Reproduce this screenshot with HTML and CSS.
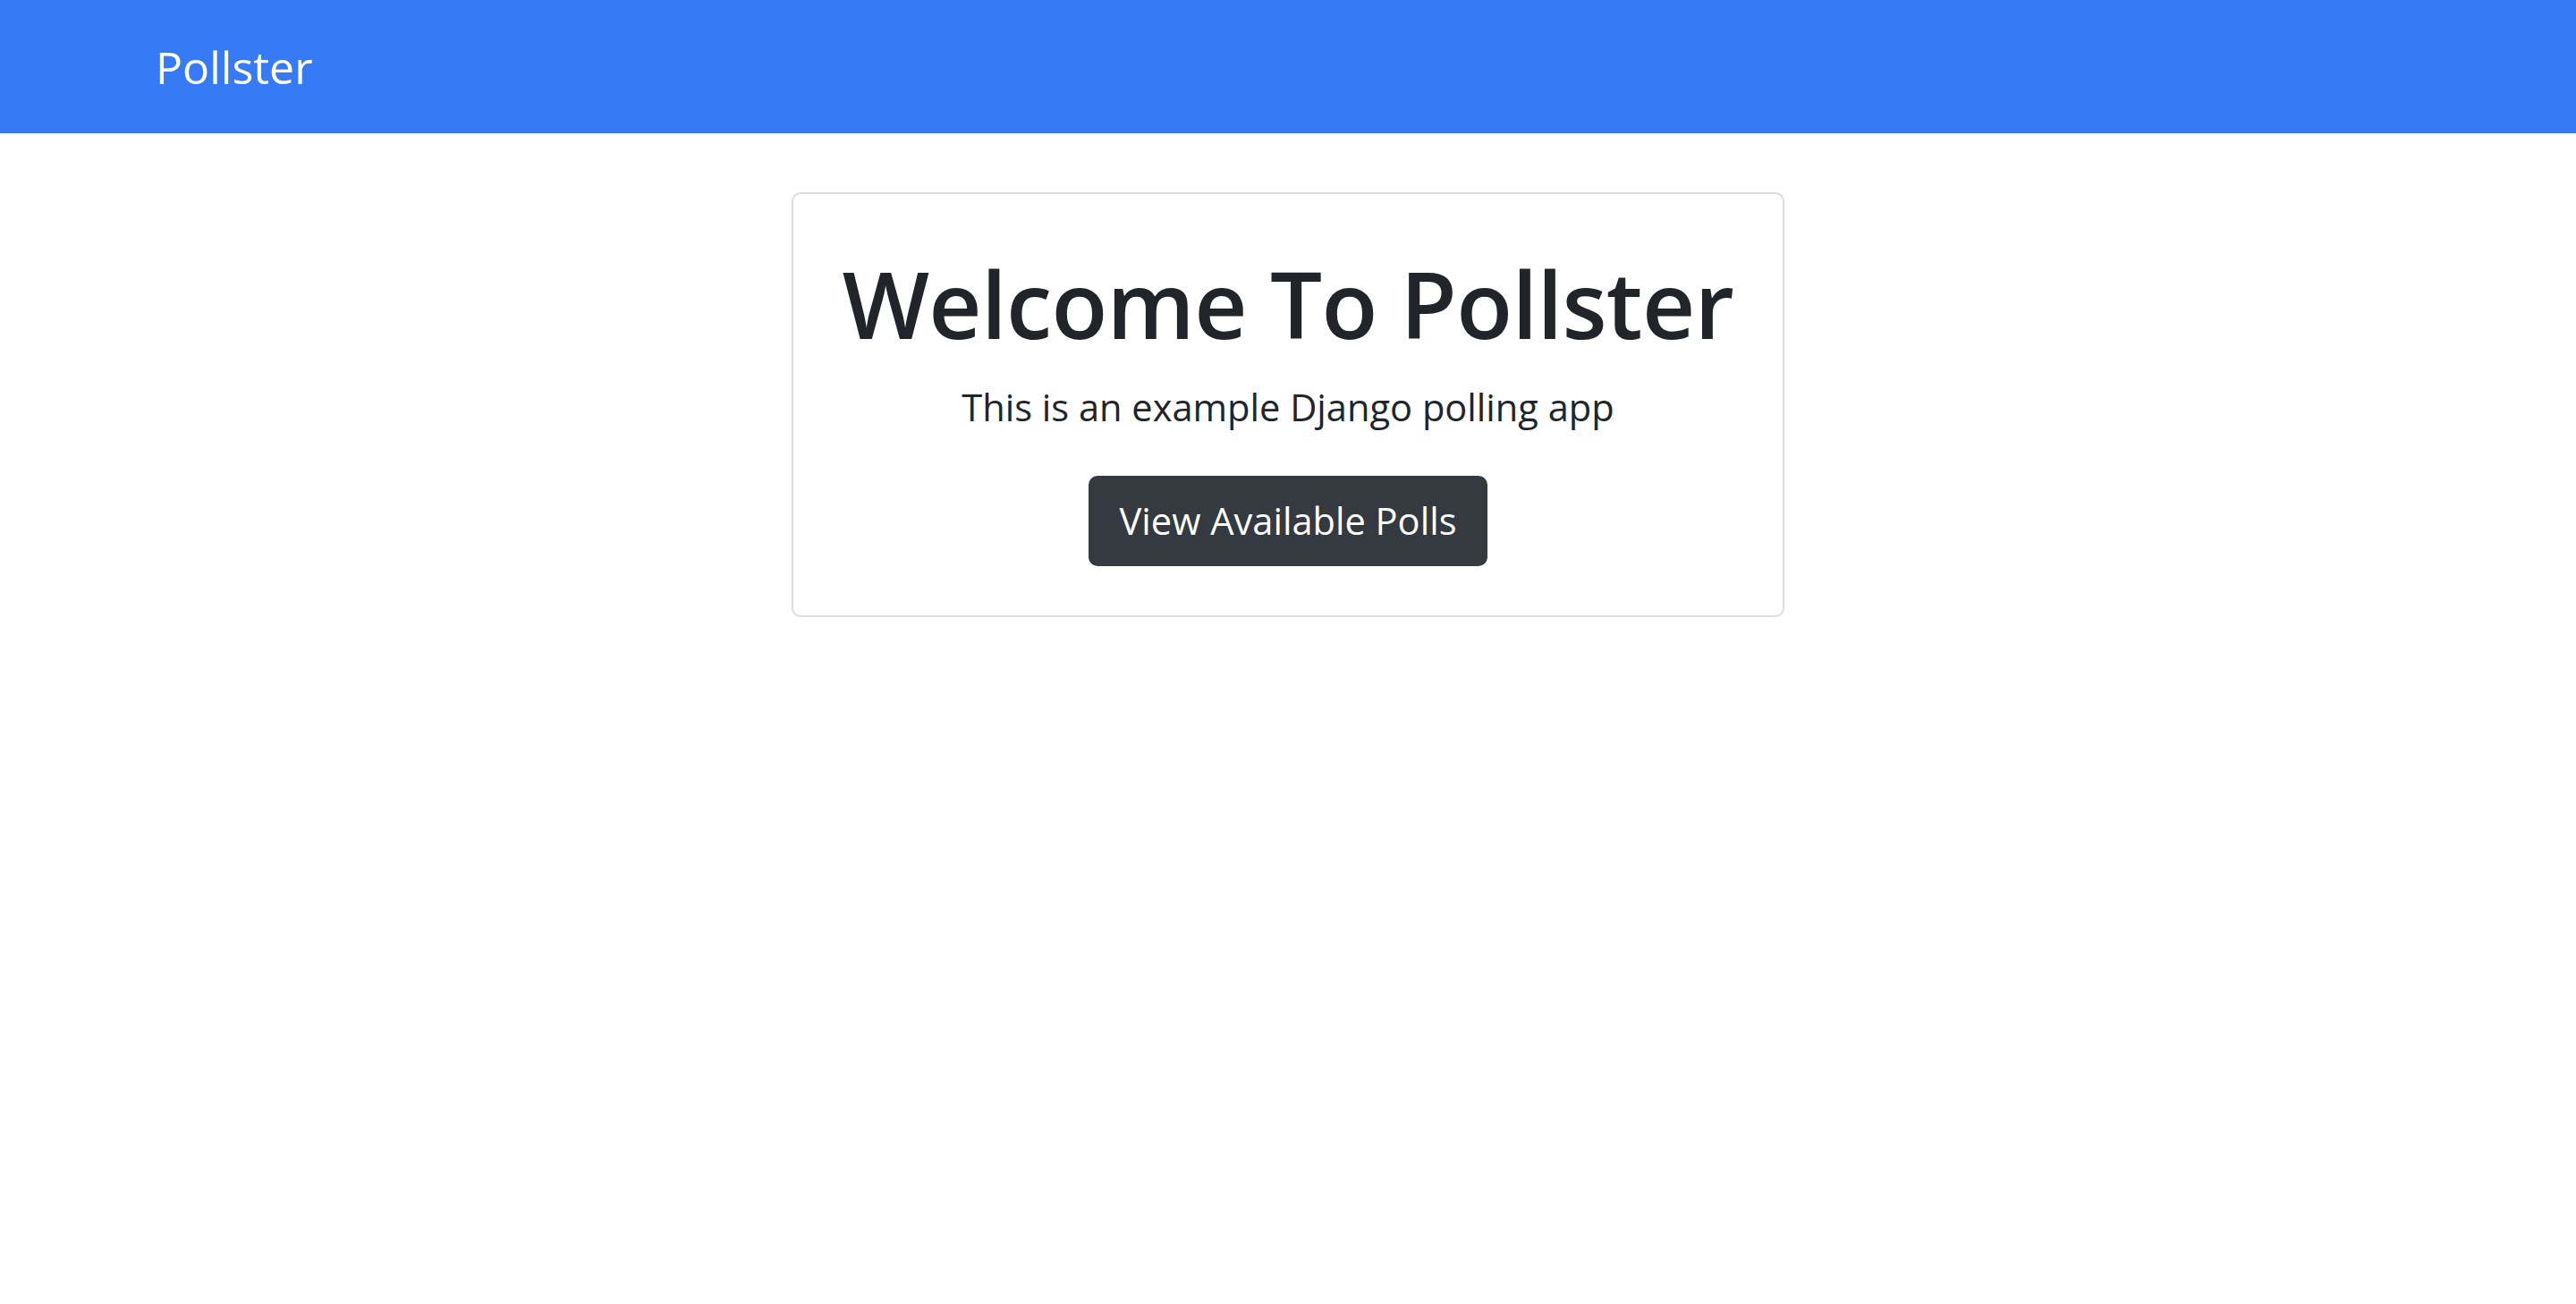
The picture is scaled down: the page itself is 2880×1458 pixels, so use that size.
FILE: index.html
```html
<!DOCTYPE html>
<html lang="en">
<head>
<meta charset="utf-8">
<title>Pollster</title>
<link rel="stylesheet" href="styles.css">
</head>
<body>
<nav class="navbar">
  <a class="brand" href="#">Pollster</a>
</nav>
<main class="main">
  <div class="card">
    <h1 class="title">Welcome To Pollster</h1>
    <p class="lead">This is an example Django polling app</p>
    <a class="btn" href="#">View Available Polls</a>
  </div>
</main>
</body>
</html>
```
FILE: styles.css
```css
* { box-sizing: border-box; }
html, body { margin: 0; padding: 0; }
body {
  font-family: "Open Sans", "Noto Sans", sans-serif;
  color: #212529;
  background: #fff;
}
.navbar {
  background: #377af6;
  height: 149px;
  display: flex;
  align-items: center;
  padding-left: 174px;
}
.brand {
  color: #fff;
  text-decoration: none;
  font-size: 50px;
  line-height: 1.5;
  padding-top: 2px;
}
.main {
  display: flex;
  justify-content: center;
  padding-top: 66px;
}
.card {
  border: 2px solid #dcdcdc;
  border-radius: 10px;
  padding: 61px 55px 55px;
  display: flex;
  flex-direction: column;
  align-items: center;
  text-align: center;
}
.title {
  margin: 0 0 22px;
  font-size: 103px;
  font-weight: 600;
  line-height: 1.2;
  letter-spacing: -0.7px;
}
.lead {
  margin: 0 0 46px;
  font-size: 41.6px;
  line-height: 1.5;
}
.btn {
  display: inline-block;
  background: #343a40;
  color: #fff;
  text-decoration: none;
  border-radius: 10px;
  height: 101px;
  line-height: 101px;
  padding: 0 35px;
  font-size: 41.6px;
}
```
